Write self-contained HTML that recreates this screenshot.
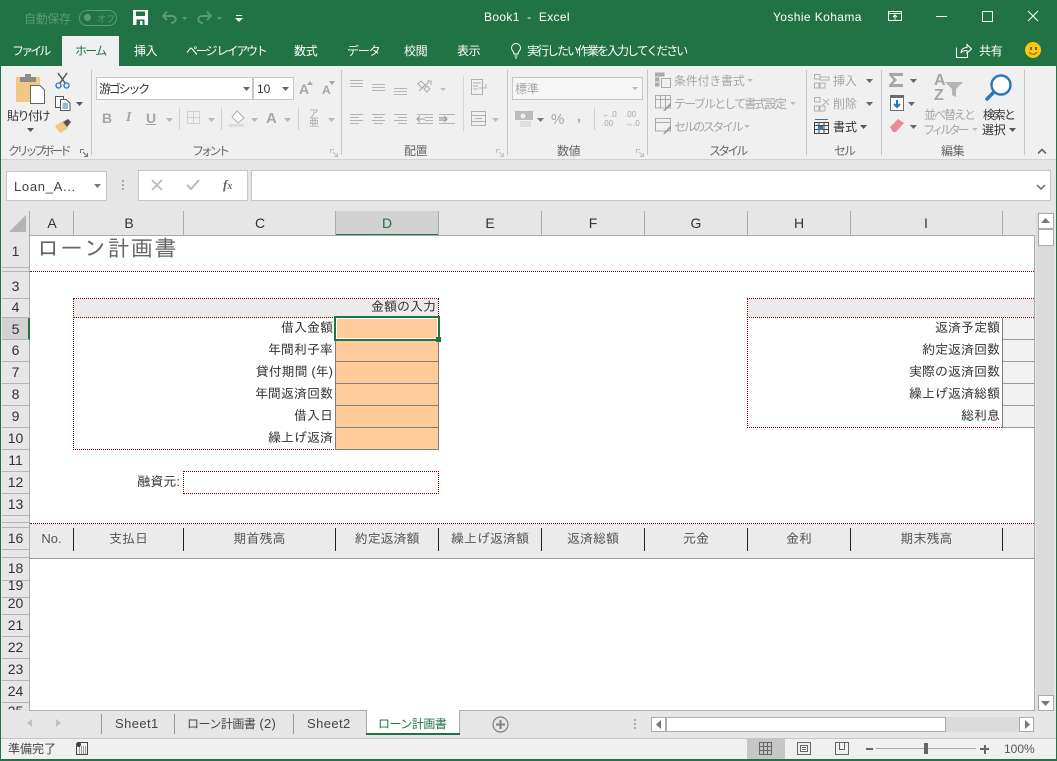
<!DOCTYPE html>
<html lang="ja"><head><meta charset="utf-8"><title>Book1 - Excel</title>
<style>
html,body{margin:0;padding:0}
body{width:1057px;height:761px;overflow:hidden;position:relative;background:#e6e6e6;font-family:"Liberation Sans","Noto Sans CJK JP",sans-serif;font-size:12px;color:#444}
div,span.a,svg{position:absolute}
.t{position:absolute;white-space:nowrap;line-height:16px;height:16px}
.w{color:#fff}
.g{color:#a6a6a6}
.tab{font-size:12px;letter-spacing:-.4px;color:#fff;top:43px}
.rb{letter-spacing:-.5px;color:#444}
.lbl{color:#666;top:143px;letter-spacing:-.4px}
.sep{width:1px;background:#c6c6c6;top:70px;height:85px}
.ch{top:215px;width:20px;text-align:center;font-size:14px;color:#333}
.vl{width:1px;background:#ababab;top:211px;height:24px}
.rh{left:2px;width:27px;text-align:center;font-size:14px;color:#333;font-family:"Liberation Sans",sans-serif}
.hl{left:2px;width:27px;height:1px;background:#b4b4b4}
.c{font-family:"Liberation Sans","IPAGothic",sans-serif;font-size:13px;letter-spacing:0;color:#333;text-align:right}
.inp{left:336px;width:102px;height:21px;background:#ffcc99;border-bottom:1px solid #7f7f7f}
.out{left:1003px;width:32px;height:21px;background:#f2f2f2;border-bottom:1px solid #999;border-top:0}
.hd{top:531px;text-align:center;font-family:"Liberation Sans","IPAGothic",sans-serif;font-size:13px;color:#555}
.tick{top:528px;width:1px;height:23px;background:#222}
.dh{height:0;border-top:1px dotted #8b0000}
.dv{width:0;border-left:1px dotted #8b0000}
</style></head><body>

<!-- green title -->
<div style="left:0;top:0;width:1057px;height:66px;background:#217346"></div>
<div style="left:62px;top:36px;width:57px;height:30px;background:#f0f0f0"></div>
<div class="t" style="left:24px;top:11px;color:#5e9a78;letter-spacing:-.3px;font-size:12px">自動保存</div>
<div style="left:79px;top:10px;width:36px;height:14px;border:1px solid #5e9a78;border-radius:8px"></div>
<div style="left:84px;top:14px;width:7px;height:7px;border-radius:50%;background:#5e9a78"></div>
<div class="t" style="left:97px;top:11px;color:#5e9a78;font-size:9px">オフ</div>
<svg style="left:133px;top:10px" width="15" height="15" viewBox="0 0 15 15"><path d="M0 0H15V15H0Z" fill="#fff"/><path d="M3 1.500H12V6H3Z" fill="#217346"/><path d="M3.500 9.500H11.500V15H3.500Z" fill="#217346"/><path d="M7 11H9.500V15H7Z" fill="#fff"/></svg>
<svg style="left:161px;top:10px" width="30" height="15" viewBox="0 0 30 15" fill="none" stroke="#5e9a78" stroke-width="2"><path d="M2 6 H11 C16 6 16 13 10 13"/><path d="M6 1.500 2 6l4 4"/><path d="M21 7h5l-2.500 3z" fill="#5e9a78" stroke="none"/></svg>
<svg style="left:196px;top:10px" width="30" height="15" viewBox="0 0 30 15" fill="none" stroke="#5e9a78" stroke-width="2"><path d="M15 6H6C1 6 1 13 7 13"/><path d="M11 1.500 15 6l-4 4"/><path d="M21 7h5l-2.500 3z" fill="#5e9a78" stroke="none"/></svg>
<svg style="left:235px;top:15px" width="8" height="7" viewBox="0 0 8 7" fill="#fff"><path d="M1 0H7V1H1Z"/><path d="M0 3H8L4 7Z"/></svg>
<div class="t w" style="left:484px;top:9px;font-size:12px;letter-spacing:.35px">Book1&nbsp; -&nbsp; Excel</div>
<div class="t w" style="left:773px;top:9px;font-size:12px;letter-spacing:.4px">Yoshie Kohama</div>
<svg style="left:888px;top:11px" width="14" height="11" viewBox="0 0 14 11" fill="none" stroke="#fff"><path d="M.5 .5H13.500V9.500H.5Z"/><path d="M1 2.500H13"/><path d="M7 8.500V4M5 6 7 4 9 6"/></svg>
<div style="left:936px;top:16px;width:11px;height:1px;background:#fff"></div>
<div style="left:982px;top:11px;width:9px;height:9px;border:1px solid #fff"></div>
<svg style="left:1027px;top:10px" width="12" height="12" viewBox="0 0 12 12" stroke="#fff" fill="none"><path d="M1 1 11 11M11 1 1 11"/></svg>

<div class="t tab" style="left:12px;letter-spacing:-2.9px">ファイル</div>
<div class="t tab" style="left:75px;color:#217346;letter-spacing:-1.7px">ホーム</div>
<div class="t tab" style="left:134px">挿入</div>
<div class="t tab" style="left:186px;letter-spacing:-2.15px">ページ レイアウト</div>
<div class="t tab" style="left:294px">数式</div>
<div class="t tab" style="left:347px;letter-spacing:-1.1px">データ</div>
<div class="t tab" style="left:404px">校閲</div>
<div class="t tab" style="left:457px">表示</div>
<svg style="left:510px;top:43px" width="12" height="16" viewBox="0 0 12 16" fill="none" stroke="#fff"><path d="M4 11C4 8 1.500 8 1.500 5A4.500 4.500 0 0 1 10.500 5C10.500 8 8 8 8 11Z"/><path d="M4.500 13H7.500M5 15H7"/></svg>
<div class="t tab" style="left:527px;letter-spacing:-2px">実行したい作業を入力してください</div>
<svg style="left:956px;top:43px" width="16" height="15" viewBox="0 0 16 15" fill="none" stroke="#fff"><path d="M.5 4.500V14.500H11.500V10"/><path d="M5 10C5 6 8 4.500 11 4.500V1.500L15.500 6 11 10V7.500C8 7.500 6 8 5 10Z"/></svg>
<div class="t tab" style="left:979px">共有</div>
<div style="left:1025px;top:42px;width:16px;height:16px;border-radius:50%;background:#fcc70d"></div>
<div style="left:1030px;top:47px;width:2px;height:3px;background:#7a6000"></div>
<div style="left:1035px;top:47px;width:2px;height:3px;background:#7a6000"></div>
<svg style="left:1025px;top:42px" width="16" height="16" viewBox="0 0 16 16" fill="none" stroke="#7a6000"><path d="M4 10C6 13 10 13 12 10"/></svg>

<!-- side & bottom green edges -->
<div style="left:0;top:66px;width:1px;height:695px;background:#217346"></div>
<div style="left:1056px;top:66px;width:1px;height:695px;background:#217346"></div>
<div style="left:0;top:759px;width:1057px;height:2px;background:#217346"></div>

<!-- ribbon -->
<div style="left:1px;top:66px;width:1055px;height:93px;background:#f0f0f0;border-bottom:1px solid #d2d2d2"></div>
<div class="sep" style="left:91px"></div><div class="sep" style="left:341px"></div><div class="sep" style="left:507px"></div><div class="sep" style="left:647px"></div><div class="sep" style="left:806px"></div><div class="sep" style="left:881px"></div><div class="sep" style="left:1024px"></div>
<div style="left:463px;top:76px;width:1px;height:55px;background:#d6d6d6"></div>
<div style="left:179px;top:108px;width:1px;height:22px;background:#d0d0d0"></div><div style="left:221px;top:108px;width:1px;height:22px;background:#d0d0d0"></div><div style="left:298px;top:108px;width:1px;height:22px;background:#d0d0d0"></div><div style="left:594px;top:108px;width:1px;height:22px;background:#d0d0d0"></div>

<!-- clipboard -->
<svg style="left:16px;top:74px" width="30" height="32" viewBox="0 0 30 32"><path d="M0 3H24V28H0Z" fill="#efc985"/><path d="M4 3H20V8H4Z" fill="#8c8c8c"/><path d="M9 0H15V4H9Z" fill="#8c8c8c"/><path d="M14.500 11.500H24L28.500 16V29.500H14.500Z" fill="#fff" stroke="#666"/></svg>
<svg style="left:55px;top:72px" width="15" height="17" viewBox="0 0 15 17" fill="none"><path d="M3 1 10 11M12 1 5 11" stroke="#555" stroke-width="1.500"/><circle cx="3.500" cy="13.500" r="2.500" stroke="#2f75b5" stroke-width="1.300"/><circle cx="11.500" cy="13.500" r="2.500" stroke="#2f75b5" stroke-width="1.300"/></svg>
<svg style="left:55px;top:96px" width="16" height="15" viewBox="0 0 16 15" fill="#fff" stroke="#555"><path d="M.5 .5H8.500V11.500H.5Z"/><path d="M5.500 3.500H11L15 7V14.500H5.500Z"/><path d="M7.500 8H13M7.500 10H13M7.500 12H13" stroke="#2f75b5"/></svg>
<svg style="left:76px;top:102px" width="7" height="4"><path d="M0 0H7L3.500 4Z" fill="#555"/></svg>
<svg style="left:55px;top:118px" width="17" height="16" viewBox="0 0 17 16"><path d="M0 8 8 3 13 10 6 15C4 14 2 12 0 8Z" fill="#efc985"/><path d="M8 4 13 1l3 3-4 5Z" fill="#555"/></svg>
<div class="t rb" style="left:7px;top:108px;font-size:12px;color:#333;letter-spacing:-1.5px">貼り付け</div>
<svg style="left:27px;top:128px" width="7" height="4"><path d="M0 0H7L3.500 4Z" fill="#555"/></svg>
<div class="t lbl" style="left:8px;letter-spacing:-3.4px">クリップボード</div>
<svg style="left:80px;top:149px" width="8" height="8" fill="none" stroke="#777"><path d="M.5 .5H4M.5 .5V4M3 3 7 7M7.500 4V7.500H4"/></svg>

<!-- font -->
<div style="left:96px;top:77px;width:155px;height:21px;background:#fff;border:1px solid #c6c6c6"></div>
<div class="t" style="left:99px;top:81px;letter-spacing:-2.2px;color:#333">游ゴシック</div>
<svg style="left:243px;top:87px" width="7" height="4"><path d="M0 0H7L3.500 4Z" fill="#666"/></svg>
<div style="left:253px;top:77px;width:39px;height:21px;background:#fff;border:1px solid #c6c6c6"></div>
<div class="t" style="left:257px;top:81px;color:#333">10</div>
<svg style="left:282px;top:87px" width="7" height="4"><path d="M0 0H7L3.500 4Z" fill="#666"/></svg>
<div class="t g" style="left:299px;top:81px;font-size:14px;font-weight:bold">A</div><svg style="left:307px;top:81px" width="6" height="4"><path d="M0 4H6L3 0Z" fill="#a6a6a6"/></svg>
<div class="t g" style="left:322px;top:82px;font-size:12px;font-weight:bold">A</div><svg style="left:329px;top:81px" width="6" height="4"><path d="M0 0H6L3 4Z" fill="#a6a6a6"/></svg>
<div class="t g" style="left:102px;top:110px;font-weight:bold;font-size:14px">B</div>
<div class="t g" style="left:126px;top:110px;font-style:italic;font-family:'Liberation Serif',serif;font-weight:bold;font-size:14px">I</div>
<div class="t g" style="left:146px;top:110px;font-weight:bold;font-size:14px;text-decoration:underline">U</div>
<svg style="left:166px;top:118px" width="7" height="4"><path d="M0 0H7L3.500 4Z" fill="#b8b8b8"/></svg>
<svg style="left:187px;top:111px" width="13" height="13" fill="none" stroke="#b5b5b5" stroke-dasharray="1 1"><path d="M.5 .5H12.500V12.500H.5ZM6.500 .5V12.500M.5 6.500H12.500"/></svg>
<svg style="left:208px;top:118px" width="7" height="4"><path d="M0 0H7L3.500 4Z" fill="#b8b8b8"/></svg>
<svg style="left:229px;top:110px" width="17" height="17" viewBox="0 0 17 17"><path d="M8 1 15 8 9 13 3 7Z" fill="#fff" stroke="#b0b0b0"/><path d="M0 14H15V17H0Z" fill="#dcdcdc"/></svg>
<svg style="left:251px;top:118px" width="7" height="4"><path d="M0 0H7L3.500 4Z" fill="#b8b8b8"/></svg>
<div class="t g" style="left:266px;top:111px;font-size:15px;font-weight:bold">A</div>
<svg style="left:284px;top:118px" width="7" height="4"><path d="M0 0H7L3.500 4Z" fill="#b8b8b8"/></svg>
<div class="t g" style="left:309px;top:110px;font-size:10px;line-height:9px;width:12px;white-space:normal;height:18px">ア亜</div>
<svg style="left:328px;top:118px" width="7" height="4"><path d="M0 0H7L3.500 4Z" fill="#b8b8b8"/></svg>
<div class="t lbl" style="left:192px;letter-spacing:-3.3px">フォント</div>
<svg style="left:330px;top:149px" width="8" height="8" fill="none" stroke="#c0c0c0"><path d="M.5 .5H4M.5 .5V4M3 3 7 7M7.500 4V7.500H4"/></svg>

<!-- alignment -->
<svg style="left:349px;top:78px" width="125" height="50" fill="none" stroke="#b4b4b4"><path d="M1 2.500H14M1 5.500H14M1 8.500H14M23 6.500H36M23 9.500H36M23 12.500H36M45 10.500H58M45 13.500H58M45 16.500H58"/><path d="M1 36.500H14M1 39.500H10M1 42.500H14M1 45.500H10M23 36.500H36M25 39.500H34M23 42.500H36M25 45.500H34M45 36.500H58M49 39.500H58M45 42.500H58M49 45.500H58M68 36.500H84M76 39.500H84M76 42.500H84M68 45.500H84M90 36.500H106M90 39.500H98M90 42.500H98M90 45.500H106"/><path d="M76 41H68M71 38 68 41 71 44M90 41H98M95 38 98 41 95 44" stroke="#999"/><path d="M70 13 80 4M69 6 72 3 76 7 73 10ZM75 11 78 8 81 11 78 14ZM78 3H82V7" stroke="#aaa"/></svg>
<svg style="left:440px;top:88px" width="6" height="3"><path d="M0 0H6L3 3Z" fill="#c0c0c0"/></svg>
<svg style="left:471px;top:79px" width="17" height="16" fill="none" stroke="#b0b0b0"><path d="M.5 .5H11.500V15.500H.5ZM2 4H10M2 7H7M2 10H7M15 5V9H8"/></svg>
<svg style="left:471px;top:111px" width="16" height="15" fill="none" stroke="#b0b0b0"><path d="M.5 .5H14.500V14.500H.5ZM.5 4.500H14.500M.5 10.500H14.500M4 7.500H11"/></svg>
<svg style="left:492px;top:118px" width="7" height="4"><path d="M0 0H7L3.500 4Z" fill="#c0c0c0"/></svg>
<div class="t lbl" style="left:404px">配置</div>
<svg style="left:496px;top:149px" width="8" height="8" fill="none" stroke="#c0c0c0"><path d="M.5 .5H4M.5 .5V4M3 3 7 7M7.500 4V7.500H4"/></svg>

<!-- number -->
<div style="left:512px;top:77px;width:129px;height:21px;background:#f6f6f6;border:1px solid #c6c6c6"></div>
<div class="t g" style="left:515px;top:81px;letter-spacing:-.3px">標準</div>
<svg style="left:632px;top:87px" width="6" height="3"><path d="M0 0H6L3 3Z" fill="#bbb"/></svg>
<svg style="left:515px;top:111px" width="18" height="17"><path d="M0 0H18V9H0Z" fill="#bbb"/><circle cx="8" cy="5" r="2.500" fill="#f0f0f0"/><path d="M5 11H16M5 13H16M5 15H16" stroke="#ccc"/></svg>
<svg style="left:537px;top:118px" width="7" height="4"><path d="M0 0H7L3.500 4Z" fill="#777"/></svg>
<div class="t g" style="left:551px;top:112px;font-size:15px">%</div>
<div class="t g" style="left:577px;top:108px;font-size:14px;font-weight:bold">,</div>
<div class="t g" style="left:602px;top:110px;font-size:8px;line-height:9px;height:18px;white-space:pre">←.0
.00</div>
<div class="t g" style="left:625px;top:110px;font-size:8px;line-height:9px;height:18px;white-space:pre">.00
→.0</div>
<div class="t lbl" style="left:557px">数値</div>
<svg style="left:636px;top:149px" width="8" height="8" fill="none" stroke="#c0c0c0"><path d="M.5 .5H4M.5 .5V4M3 3 7 7M7.500 4V7.500H4"/></svg>

<!-- styles -->
<svg style="left:655px;top:72px" width="16" height="16" fill="none" stroke="#aaa"><path d="M0 1H9V4H0ZM0 6H4V9H0ZM0 11H4V14H0Z" fill="#aaa"/><path d="M6.500 6.500H15.500V15.500H6.500Z"/></svg>
<svg style="left:655px;top:95px" width="17" height="17" fill="none" stroke="#aaa"><path d="M.5 .5H15.500V13H.5ZM.5 4.500H15.500M5.500 .5V13M10.500 .5V13"/><path d="M8 16 15 8 16 10 10 16Z" fill="#999" stroke="none"/></svg>
<svg style="left:655px;top:118px" width="17" height="17" fill="none" stroke="#aaa"><path d="M.5 .5H15.500V13H.5ZM.5 4.500H15.500"/><path d="M8 16 15 8 16 10 10 16Z" fill="#999" stroke="none"/></svg>
<div class="t g" style="left:674px;top:73px;letter-spacing:-.25px">条件付き書式</div>
<svg style="left:747px;top:79px" width="6" height="3"><path d="M0 0H6L3 3Z" fill="#c0c0c0"/></svg>
<div class="t g" style="left:674px;top:96px;letter-spacing:-1.8px">テーブルとして書式設定</div>
<svg style="left:790px;top:102px" width="6" height="3"><path d="M0 0H6L3 3Z" fill="#c0c0c0"/></svg>
<div class="t g" style="left:674px;top:119px;letter-spacing:-2.4px">セルのスタイル</div>
<svg style="left:744px;top:125px" width="6" height="3"><path d="M0 0H6L3 3Z" fill="#c0c0c0"/></svg>
<div class="t lbl" style="left:709px;letter-spacing:-2.9px">スタイル</div>

<!-- cells -->
<svg style="left:814px;top:73px" width="16" height="16" fill="none" stroke="#b0b0b0"><path d="M.5 1.500H6V6H.5ZM.5 10H5V15H.5ZM6 10H11V15H6ZM6 4H15V7H6Z"/></svg>
<svg style="left:814px;top:96px" width="16" height="16" fill="none" stroke="#b0b0b0"><path d="M.5 1.500H6V6H.5ZM.5 10H5V15H.5ZM6 10H11V15H6ZM9 3 15 9M15 3 9 9"/></svg>
<svg style="left:814px;top:118px" width="15" height="17" fill="none" stroke="#444"><path d="M.5 4.500H14.500V15.500H.5ZM.5 7.500H14.500M5 4.500V15.500M10 4.500V15.500M.5 11.500H14.500"/><path d="M1 1.500H14" stroke="#2f75b5"/><path d="M4 8H9V12H4Z" fill="#2f75b5" stroke="none"/></svg>
<div class="t g" style="left:833px;top:73px">挿入</div>
<svg style="left:866px;top:79px" width="7" height="4"><path d="M0 0H7L3.500 4Z" fill="#666"/></svg>
<div class="t g" style="left:833px;top:96px">削除</div>
<svg style="left:866px;top:102px" width="7" height="4"><path d="M0 0H7L3.500 4Z" fill="#666"/></svg>
<div class="t" style="left:833px;top:119px;color:#333">書式</div>
<svg style="left:860px;top:125px" width="7" height="4"><path d="M0 0H7L3.500 4Z" fill="#555"/></svg>
<div class="t lbl" style="left:834px;letter-spacing:-2px">セル</div>

<!-- editing -->
<svg style="left:889px;top:73px" width="15" height="15"><path d="M0 0H14V3H4L8 7 4 11H14V14H0V12L4.500 7 0 2Z" fill="#a6a6a6"/></svg>
<svg style="left:910px;top:79px" width="7" height="4"><path d="M0 0H7L3.500 4Z" fill="#666"/></svg>
<svg style="left:890px;top:95px" width="14" height="16"><path d="M0 0H14V16H0Z" fill="#6d6d6d"/><path d="M1 3H13V15H1Z" fill="#fff"/><path d="M7 5V12M4 9 7 12 10 9" stroke="#2f75b5" stroke-width="2" fill="none"/></svg>
<svg style="left:908px;top:102px" width="7" height="4"><path d="M0 0H7L3.500 4Z" fill="#666"/></svg>
<svg style="left:890px;top:119px" width="14" height="13"><path d="M0 8 8 0 14 4 6 13H3Z" fill="#ea8b99"/></svg>
<svg style="left:910px;top:125px" width="7" height="4"><path d="M0 0H7L3.500 4Z" fill="#666"/></svg>
<div class="t g" style="left:934px;top:73px;font-size:16px;font-weight:bold;line-height:15px;height:32px;white-space:pre">A
Z</div>
<svg style="left:945px;top:82px" width="18" height="15"><path d="M0 0H18L11 7V15L7 13V7Z" fill="#b5b5b5"/></svg>
<div class="t g" style="left:924px;top:107px;letter-spacing:-2px">並べ替えと</div>
<div class="t g" style="left:923px;top:122px;letter-spacing:-3.300px">フィルター</div>
<svg style="left:972px;top:128px" width="6" height="3"><path d="M0 0H6L3 3Z" fill="#c0c0c0"/></svg>
<svg style="left:984px;top:73px" width="29" height="29" fill="none"><circle cx="17" cy="12" r="9.500" stroke="#2f75b5" stroke-width="2.400" fill="#fff"/><path d="M10 19 3 26" stroke="#2f75b5" stroke-width="3.500" stroke-linecap="round"/></svg>
<div class="t" style="left:983px;top:107px;letter-spacing:-1.5px;color:#333">検索と</div>
<div class="t" style="left:982px;top:122px;letter-spacing:-.3px;color:#333">選択</div>
<svg style="left:1009px;top:128px" width="7" height="4"><path d="M0 0H7L3.500 4Z" fill="#555"/></svg>
<div class="t lbl" style="left:941px">編集</div>
<svg style="left:1037px;top:148px" width="10" height="6" fill="none" stroke="#666" stroke-width="1.600"><path d="M1 5.500 5 1.500 9 5.500"/></svg>

<!-- formula bar -->
<div style="left:6px;top:171px;width:99px;height:28px;background:#fff;border:1px solid #c6c6c6"></div>
<div class="t" style="left:14px;top:179px;font-size:13px;letter-spacing:.7px;color:#444">Loan_A...</div>
<svg style="left:94px;top:184px" width="7" height="4"><path d="M0 0H7L3.500 4Z" fill="#777"/></svg>
<div style="left:122px;top:180px;width:2px;height:2px;background:#aaa"></div><div style="left:122px;top:184px;width:2px;height:2px;background:#aaa"></div><div style="left:122px;top:188px;width:2px;height:2px;background:#aaa"></div>
<div style="left:138px;top:170px;width:108px;height:29px;background:#fff;border:1px solid #c6c6c6"></div>
<svg style="left:151px;top:179px" width="12" height="12" stroke="#bbb" stroke-width="1.800" fill="none"><path d="M1 1 11 11M11 1 1 11"/></svg>
<svg style="left:186px;top:179px" width="15" height="12" stroke="#bbb" stroke-width="2" fill="none"><path d="M1 6 5 10 13 1"/></svg>
<div class="t" style="left:223px;top:177px;font-family:'Liberation Serif',serif;font-style:italic;font-weight:bold;font-size:13px;color:#666">f<span style="font-size:10px">x</span></div>
<div style="left:251px;top:170px;width:798px;height:29px;background:#fff;border:1px solid #c6c6c6"></div>
<svg style="left:1036px;top:184px" width="10" height="6" fill="none" stroke="#666" stroke-width="1.500"><path d="M1 1 5 5 9 1"/></svg>

<!-- headers bg -->
<div style="left:1px;top:211px;width:1037px;height:24px;background:#e6e6e6"></div>
<svg style="left:9px;top:215px" width="17" height="17"><path d="M17 0V17H0Z" fill="#b4b4b4"/></svg>
<div style="left:335px;top:211px;width:103px;height:23px;background:#d2d2d2"></div>
<div style="left:335px;top:234px;width:104px;height:2px;background:#217346"></div>
<div class="vl" style="left:29px"></div><div class="vl" style="left:73px"></div><div class="vl" style="left:183px"></div><div class="vl" style="left:335px"></div><div class="vl" style="left:438px"></div><div class="vl" style="left:541px"></div><div class="vl" style="left:644px"></div><div class="vl" style="left:747px"></div><div class="vl" style="left:850px"></div><div class="vl" style="left:1002px"></div>
<div class="t ch" style="left:42px">A</div><div class="t ch" style="left:119px">B</div><div class="t ch" style="left:250px">C</div><div class="t ch" style="left:377px;color:#217346">D</div><div class="t ch" style="left:480px">E</div><div class="t ch" style="left:583px">F</div><div class="t ch" style="left:686px">G</div><div class="t ch" style="left:789px">H</div><div class="t ch" style="left:916px">I</div>

<!-- sheet -->
<div style="left:30px;top:236px;width:1005px;height:474px;background:#fff"></div>
<div style="left:29px;top:235px;width:1006px;height:1px;background:#ababab"></div>
<div style="left:29px;top:235px;width:1px;height:476px;background:#ababab"></div>
<div style="left:1034px;top:235px;width:1px;height:476px;background:#ababab"></div>
<div style="left:29px;top:710px;width:1006px;height:1px;background:#ababab"></div>

<!-- row headers -->
<div style="left:2px;top:318px;width:27px;height:22px;background:#d2d2d2"></div>
<div style="left:28px;top:318px;width:2px;height:22px;background:#217346"></div>
<div class="hl" style="top:267px"></div><div class="hl" style="top:271px"></div><div class="hl" style="top:298px"></div><div class="hl" style="top:317px"></div><div class="hl" style="top:339px"></div><div class="hl" style="top:361px"></div><div class="hl" style="top:383px"></div><div class="hl" style="top:405px"></div><div class="hl" style="top:427px"></div><div class="hl" style="top:449px"></div><div class="hl" style="top:471px"></div><div class="hl" style="top:493px"></div><div class="hl" style="top:515px"></div><div class="hl" style="top:522px"></div><div class="hl" style="top:527px"></div><div class="hl" style="top:549px"></div><div class="hl" style="top:557px"></div><div class="hl" style="top:580px"></div><div class="hl" style="top:597px"></div><div class="hl" style="top:614px"></div><div class="hl" style="top:636px"></div><div class="hl" style="top:658px"></div><div class="hl" style="top:680px"></div><div class="hl" style="top:702px"></div>
<div class="t rh" style="top:243px">1</div><div class="t rh" style="top:278px">3</div><div class="t rh" style="top:299px">4</div><div class="t rh" style="top:321px">5</div><div class="t rh" style="top:342px">6</div><div class="t rh" style="top:364px">7</div><div class="t rh" style="top:386px">8</div><div class="t rh" style="top:408px">9</div><div class="t rh" style="top:430px">10</div><div class="t rh" style="top:452px">11</div><div class="t rh" style="top:474px">12</div><div class="t rh" style="top:496px">13</div><div class="t rh" style="top:530px">16</div><div class="t rh" style="top:560px">18</div><div class="t rh" style="top:578px;height:14px;line-height:14px;overflow:hidden">19</div><div class="t rh" style="top:597px;height:13px;line-height:13px;overflow:hidden">20</div><div class="t rh" style="top:617px">21</div><div class="t rh" style="top:639px">22</div><div class="t rh" style="top:661px">23</div><div class="t rh" style="top:683px">24</div><div class="t rh" style="top:703px;height:7px;overflow:hidden">25</div>

<!-- content -->
<div class="t" style="left:37px;top:236px;font-family:'Liberation Sans','IPAGothic',sans-serif;font-size:22px;line-height:26px;height:26px;color:#666;letter-spacing:1.500px">ローン計画書</div>
<div class="dh" style="left:30px;top:271px;width:1004px"></div>

<div style="left:74px;top:299px;width:364px;height:19px;background:#ebebeb"></div>
<div class="dh" style="left:73px;top:298px;width:366px"></div>
<div class="dh" style="left:73px;top:317px;width:366px"></div>
<div class="dv" style="left:73px;top:298px;height:152px"></div>
<div class="dv" style="left:438px;top:298px;height:20px"></div>
<div class="dh" style="left:73px;top:449px;width:263px"></div>
<div class="t c" style="right:621px;top:299px">金額の入力</div>

<div class="inp" style="top:318px"></div><div class="inp" style="top:340px"></div><div class="inp" style="top:362px"></div><div class="inp" style="top:384px"></div><div class="inp" style="top:406px"></div><div class="inp" style="top:428px"></div>
<div style="left:335px;top:318px;width:1px;height:132px;background:#7f7f7f"></div>
<div style="left:438px;top:318px;width:1px;height:132px;background:#7f7f7f"></div>
<div style="left:334px;top:316px;width:102px;height:21px;border:2px solid #217346;box-shadow:inset 0 0 0 1px #fff"></div>
<div style="left:436px;top:337px;width:5px;height:5px;background:#217346"></div>

<div class="t c" style="right:724px;top:320px">借入金額</div>
<div class="t c" style="right:724px;top:342px">年間利子率</div>
<div class="t c" style="right:724px;top:364px">貸付期間 (年)</div>
<div class="t c" style="right:724px;top:386px">年間返済回数</div>
<div class="t c" style="right:724px;top:408px">借入日</div>
<div class="t c" style="right:724px;top:430px">繰上げ返済</div>

<div class="t c" style="right:877px;top:474px">融資元:</div>
<div class="dh" style="left:183px;top:471px;width:256px"></div>
<div class="dh" style="left:183px;top:493px;width:256px"></div>
<div class="dv" style="left:183px;top:471px;height:23px"></div>
<div class="dv" style="left:438px;top:471px;height:23px"></div>

<!-- right box -->
<div style="left:748px;top:299px;width:286px;height:18px;background:#ebebeb"></div>
<div class="dh" style="left:747px;top:298px;width:287px"></div>
<div class="dh" style="left:747px;top:317px;width:287px"></div>
<div class="dv" style="left:747px;top:298px;height:130px"></div>
<div class="dh" style="left:747px;top:427px;width:255px"></div>
<div class="out" style="top:318px;width:31px"></div><div class="out" style="top:340px;width:31px"></div><div class="out" style="top:362px;width:31px"></div><div class="out" style="top:384px;width:31px"></div><div class="out" style="top:406px;width:31px"></div>
<div style="left:1002px;top:318px;width:1px;height:110px;background:#7f7f7f"></div>
<div class="t c" style="right:57px;top:320px">返済予定額</div>
<div class="t c" style="right:57px;top:342px">約定返済回数</div>
<div class="t c" style="right:57px;top:364px">実際の返済回数</div>
<div class="t c" style="right:57px;top:386px">繰上げ返済総額</div>
<div class="t c" style="right:57px;top:408px">総利息</div>

<!-- table head -->
<div style="left:30px;top:524px;width:1004px;height:34px;background:#ebebeb"></div>
<div class="dh" style="left:30px;top:523px;width:1004px"></div>
<div style="left:30px;top:558px;width:1004px;height:1px;background:#999"></div>
<div class="tick" style="left:73px"></div><div class="tick" style="left:183px"></div><div class="tick" style="left:335px"></div><div class="tick" style="left:438px"></div><div class="tick" style="left:541px"></div><div class="tick" style="left:644px"></div><div class="tick" style="left:747px"></div><div class="tick" style="left:850px"></div><div class="tick" style="left:1002px"></div>
<div class="t hd" style="left:30px;width:43px">No.</div>
<div class="t hd" style="left:74px;width:109px">支払日</div>
<div class="t hd" style="left:184px;width:151px">期首残高</div>
<div class="t hd" style="left:336px;width:102px">約定返済額</div>
<div class="t hd" style="left:439px;width:102px">繰上げ返済額</div>
<div class="t hd" style="left:542px;width:102px">返済総額</div>
<div class="t hd" style="left:645px;width:102px">元金</div>
<div class="t hd" style="left:748px;width:102px">金利</div>
<div class="t hd" style="left:851px;width:151px">期末残高</div>

<!-- v scrollbar -->
<div style="left:1036px;top:212px;width:18px;height:499px;background:#dbdbdb"></div>
<div style="left:1038px;top:213px;width:14px;height:14px;background:#fff;border:1px solid #ababab"></div>
<svg style="left:1041px;top:218px" width="9" height="5"><path d="M0 5H9L4.500 0Z" fill="#777"/></svg>
<div style="left:1038px;top:229px;width:14px;height:15px;background:#fff;border:1px solid #ababab"></div>
<div style="left:1038px;top:695px;width:14px;height:14px;background:#fff;border:1px solid #ababab"></div>
<svg style="left:1041px;top:701px" width="9" height="5"><path d="M0 0H9L4.500 5Z" fill="#777"/></svg>

<!-- tabs -->
<svg style="left:27px;top:719px" width="36" height="9" fill="#c0c0c0"><path d="M5 0V8L0 4Z"/><path d="M29 0V8L34 4Z"/></svg>
<div style="left:101px;top:714px;width:1px;height:20px;background:#999"></div>
<div style="left:174px;top:714px;width:1px;height:20px;background:#999"></div>
<div style="left:293px;top:714px;width:1px;height:20px;background:#999"></div>
<div style="left:366px;top:710px;width:92px;height:23px;background:#fff;border:1px solid #ababab;border-top:0;border-bottom:0"></div>
<div style="left:366px;top:733px;width:94px;height:2px;background:#217346"></div>
<div class="t" style="left:115px;top:716px;font-size:13px;letter-spacing:.4px;color:#444">Sheet1</div>
<div class="t" style="left:187px;top:716px;font-size:12px;letter-spacing:-.5px;color:#444">ローン計画書<span style="font-size:13px;letter-spacing:.3px"> (2)</span></div>
<div class="t" style="left:307px;top:716px;font-size:13px;letter-spacing:.4px;color:#444">Sheet2</div>
<div class="t" style="left:378px;top:716px;font-size:12px;letter-spacing:-.5px;color:#217346">ローン計画書</div>
<svg style="left:492px;top:716px" width="17" height="17" fill="none" stroke="#808080"><circle cx="8.500" cy="8.500" r="7.500" stroke-width="1.200"/><path d="M8.500 4V13M4 8.500H13" stroke-width="2"/></svg>
<div style="left:634px;top:719px;width:2px;height:2px;background:#aaa"></div><div style="left:634px;top:723px;width:2px;height:2px;background:#aaa"></div><div style="left:634px;top:727px;width:2px;height:2px;background:#aaa"></div>

<!-- h scrollbar -->
<div style="left:651px;top:717px;width:382px;height:15px;background:#dbdbdb"></div>
<div style="left:651px;top:717px;width:13px;height:13px;background:#fff;border:1px solid #ababab"></div>
<svg style="left:656px;top:720px" width="5" height="9"><path d="M5 0V9L0 4.500Z" fill="#777"/></svg>
<div style="left:666px;top:717px;width:278px;height:13px;background:#fff;border:1px solid #ababab"></div>
<div style="left:1019px;top:717px;width:13px;height:13px;background:#fff;border:1px solid #ababab"></div>
<svg style="left:1025px;top:720px" width="5" height="9"><path d="M0 0V9L5 4.500Z" fill="#777"/></svg>

<!-- status -->
<div style="left:1px;top:738px;width:1055px;height:1px;background:#c6c6c6"></div>
<div style="left:1px;top:739px;width:1055px;height:20px;background:#f0f0f0"></div>
<div class="t" style="left:8px;top:741px;font-size:12px;color:#444">準備完了</div>
<svg style="left:76px;top:742px" width="12" height="13"><path d="M3 .5H11.500V12.500H.5V4" fill="none" stroke="#444"/><circle cx="2.500" cy="2.500" r="2.500" fill="#444"/><path d="M3 5H10M3 7H10M3 9H10M3 11H10" stroke="#555" stroke-dasharray="1 1"/></svg>
<div style="left:747px;top:739px;width:38px;height:20px;background:#c6c6c6"></div>
<svg style="left:759px;top:742px" width="13" height="13" fill="none" stroke="#666"><path d="M.5 .5H12.500V12.500H.5ZM4.500 .5V12.500M8.500 .5V12.500M.5 4.500H12.500M.5 8.500H12.500"/></svg>
<svg style="left:797px;top:742px" width="14" height="13" fill="none" stroke="#666"><path d="M.5 .5H13.500V12.500H.5ZM3.500 3.500H10.500V9.500H3.500ZM5 5.500H9M5 7.500H9"/></svg>
<svg style="left:835px;top:742px" width="14" height="13" fill="none" stroke="#666"><path d="M.5 .5H13.500V12.500H.5ZM4.500 .5V7.500H9.500V.5"/></svg>
<div style="left:866px;top:748px;width:7px;height:2px;background:#666"></div>
<div style="left:876px;top:748px;width:100px;height:1px;background:#aaa"></div>
<div style="left:924px;top:743px;width:4px;height:11px;background:#666"></div>
<div style="left:980px;top:748px;width:9px;height:2px;background:#666"></div>
<div style="left:984px;top:745px;width:2px;height:9px;background:#666"></div>
<div class="t" style="left:1004px;top:741px;font-size:12px;color:#555">100%</div>
</body></html>
